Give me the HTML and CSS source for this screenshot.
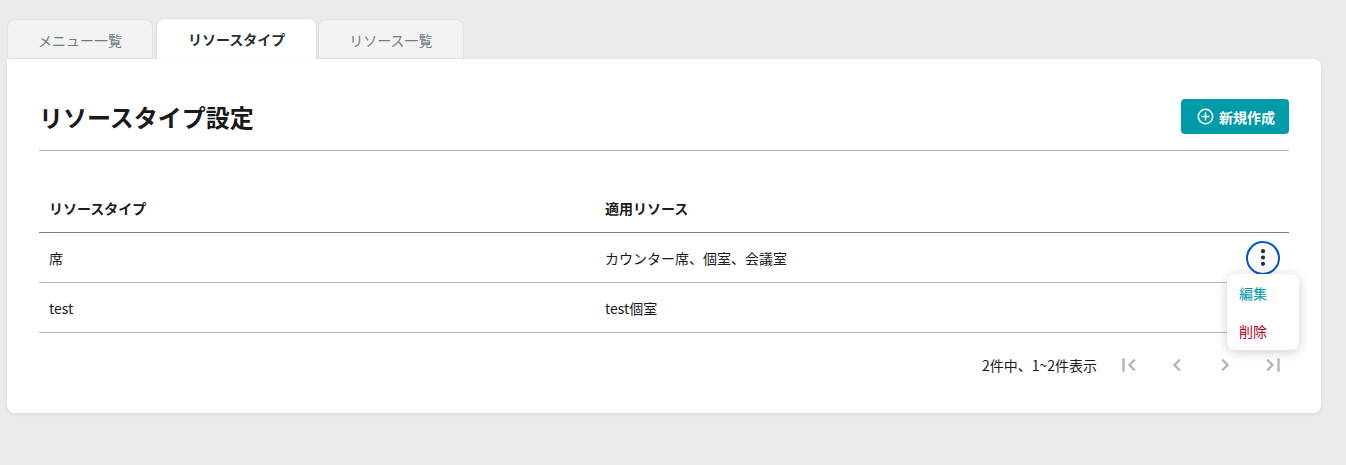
FILE: index.html
```html
<!DOCTYPE html>
<html lang="ja">
<head>
    <meta charset="UTF-8">
    <meta name="viewport" content="width=device-width, initial-scale=1.0">
    <title>リソースタイプ設定</title>
    <link rel="stylesheet" href="styles.css">
</head>
<body>

    <nav class="tabs">
        <a class="tab" href="#menu">メニュー一覧</a>
        <a class="tab active" href="#resource-type">リソースタイプ</a>
        <a class="tab" href="#resource">リソース一覧</a>
    </nav>

    <main class="panel">
        <div class="panel-header">
            <h1>リソースタイプ設定</h1>
            <button class="create-button" type="button">
                <svg width="18" height="18" viewBox="0 0 18 18" fill="none" stroke="currentColor" stroke-width="1.5">
                    <circle cx="8.5" cy="8.5" r="7.2"/>
                    <path d="M8.5 4.5v8M4.5 8.5h8"/>
                </svg>
                新規作成
            </button>
        </div>

        <table class="resource-table">
            <thead>
                <tr>
                    <th>リソースタイプ</th>
                    <th>適用リソース</th>
                    <th class="action"></th>
                </tr>
            </thead>
            <tbody>
                <tr>
                    <td>席</td>
                    <td>カウンター席、個室、会議室</td>
                    <td class="action">
                        <div class="dropdown">
                            <button class="more-button" type="button" aria-label="操作">
                                <svg width="24" height="24" viewBox="0 0 24 24" fill="currentColor">
                                    <circle cx="12" cy="5.2" r="2.1"/>
                                    <circle cx="12" cy="11.5" r="2.1"/>
                                    <circle cx="12" cy="17.8" r="2.1"/>
                                </svg>
                            </button>
                            <div class="dropdown-menu">
                                <button class="edit" type="button">編集</button>
                                <button class="delete" type="button">削除</button>
                            </div>
                        </div>
                    </td>
                </tr>
                <tr>
                    <td>test</td>
                    <td>test個室</td>
                    <td class="action"></td>
                </tr>
            </tbody>
        </table>

        <div class="pagination">
            <span>2件中、1~2件表示</span>
            <button type="button" aria-label="最初のページ" disabled>
                <svg width="24" height="24" viewBox="0 0 24 24"><path d="M18.41 16.59L13.82 12l4.59-4.59L17 6l-6 6 6 6zM5.5 5.5h2v13h-2z"/></svg>
            </button>
            <button type="button" aria-label="前のページ" disabled>
                <svg width="24" height="24" viewBox="0 0 24 24"><path d="M15.41 7.41L14 6l-6 6 6 6 1.41-1.41L10.83 12z"/></svg>
            </button>
            <button type="button" aria-label="次のページ" disabled>
                <svg width="24" height="24" viewBox="0 0 24 24"><path d="M10 6L8.59 7.41 13.17 12l-4.58 4.59L10 18l6-6z"/></svg>
            </button>
            <button type="button" aria-label="最後のページ" disabled>
                <svg width="24" height="24" viewBox="0 0 24 24"><path d="M5.59 7.41L10.18 12l-4.59 4.59L7 18l6-6-6-6zM16.5 5.5h2v13h-2z"/></svg>
            </button>
        </div>
    </main>

</body>
</html>
```
FILE: styles.css
```css
* {
    box-sizing: border-box;
}

body {
    margin: 0;
    padding: 19px 25px 52px 7px;
    background-color: #ebebeb;
    color: #1a1a1a;
    font-family: "Noto Sans CJK JP", sans-serif;
    font-size: 14px;
    line-height: 20px;
}

button {
    padding: 0;
    border: none;
    background: none;
    color: inherit;
    font: inherit;
    cursor: pointer;
}

svg {
    display: block;
}

.tabs {
    display: flex;
    align-items: flex-end;
}

.tab {
    padding: 10px 30px 9px;
    border: 1px solid #e2e2e2;
    border-bottom: none;
    border-radius: 8px 8px 0 0;
    background-color: #f3f3f3;
    color: #6b7f7f;
    text-decoration: none;
    box-shadow: inset 0 -2px 2px -1px rgba(0, 0, 0, 0.06);
}

.tab.active {
    margin: 0 2px 0 4px;
    padding: 10px 31px;
    border: none;
    background-color: #fff;
    color: #263232;
    font-weight: bold;
    box-shadow: 0 0 3px rgba(0, 0, 0, 0.1);
}

.panel {
    position: relative;
    padding: 40px 32px 32px;
    border-radius: 0 8px 8px 8px;
    background-color: #fff;
    box-shadow: 0 1px 4px rgba(0, 0, 0, 0.08);
}

.panel-header {
    display: flex;
    justify-content: space-between;
    align-items: flex-start;
    padding-bottom: 16px;
    border-bottom: 1px solid #a3b8b8;
}

h1 {
    margin: 0;
    font-size: 24px;
    line-height: 35px;
}

.create-button {
    display: flex;
    align-items: center;
    gap: 4px;
    height: 35px;
    padding: 0 14px 0 16px;
    border-radius: 4px;
    background-color: #009ba9;
    color: #fff;
    font-weight: bold;
}

.resource-table {
    width: 100%;
    margin-top: 32px;
    border-spacing: 0;
    table-layout: fixed;
}

.resource-table th,
.resource-table td {
    height: 50px;
    padding: 0 10px;
    border-bottom: 1px solid #a3b8b8;
    text-align: left;
}

.resource-table th {
    border-bottom-color: #6f8484;
}

.resource-table .action {
    width: 138px;
    padding-right: 9px;
}

.dropdown {
    position: relative;
    width: 34px;
    margin-left: auto;
}

.more-button {
    display: flex;
    align-items: center;
    justify-content: center;
    width: 34px;
    height: 34px;
    border: 2px solid #0055cc;
    border-radius: 50%;
    color: #263232;
}

.dropdown-menu {
    position: absolute;
    top: 33px;
    right: -19px;
    width: 72px;
    border-radius: 8px;
    background-color: #fff;
    box-shadow: 0 2px 12px rgba(0, 0, 0, 0.2);
}

.dropdown-menu button {
    display: block;
    width: 100%;
    padding: 9px 12px;
    text-align: left;
}

.dropdown-menu .edit {
    color: #009ba9;
}

.dropdown-menu .delete {
    color: #b5002a;
}

.pagination {
    display: flex;
    justify-content: flex-end;
    align-items: center;
    gap: 16px;
    margin-top: 16px;
}

.pagination button {
    display: flex;
    align-items: center;
    justify-content: center;
    width: 32px;
    height: 32px;
    cursor: default;
}

.pagination svg {
    fill: #b5b5b5;
    stroke: #b5b5b5;
    stroke-width: 0.4;
}
```
